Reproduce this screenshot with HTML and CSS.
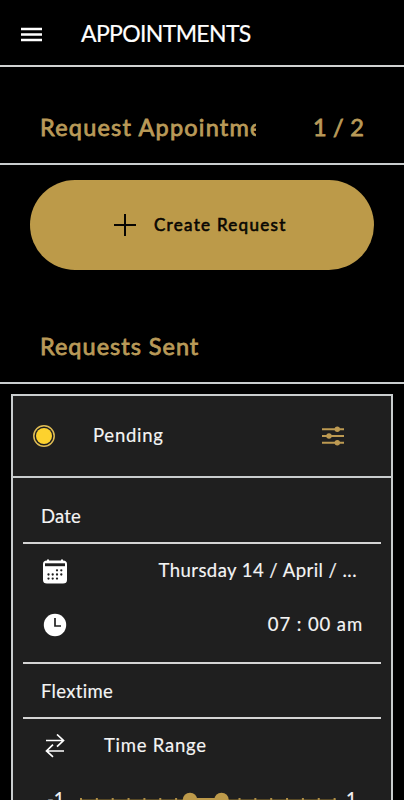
FILE: index.html
```html
<!DOCTYPE html>
<html lang="en">
<head>
<meta charset="utf-8">
<meta name="viewport" content="width=device-width, initial-scale=1">
<title>Appointments</title>
<link rel="stylesheet" href="styles.css">
</head>
<body>
<header class="topbar">
  <svg class="menu" width="21" height="15" viewBox="0 0 21 15" stroke="#fff" stroke-width="2.4"><path d="M0 2h21M0 7.5h21M0 13h21"/></svg>
  <h1 class="title"><span>APPOINTMENTS</span></h1>
</header>
<section class="section-head first">
  <h2 class="clip"><span class="t-appt">Request Appointment</span></h2>
  <span class="count">1 / 2</span>
</section>
<button class="create">
  <svg width="22" height="22" viewBox="0 0 22 22" stroke="#080602" stroke-width="2"><path d="M11 0v22M0 11h22"/></svg>
  <span class="t-create">Create Request</span>
</button>
<section class="section-head sent">
  <h2><span class="t-sent">Requests Sent</span></h2>
</section>
<main class="card">
  <div class="status">
    <svg width="22" height="22" viewBox="0 0 22 22"><circle cx="11" cy="11" r="10.2" fill="none" stroke="#e0bd55" stroke-width="1.5"/><circle cx="11" cy="11" r="8" fill="#fdd22e"/></svg>
    <span class="t-pending">Pending</span>
    <svg class="filter" width="22" height="20" viewBox="0 0 22 20" stroke="#bd9a52" stroke-width="1.9" fill="#bd9a52"><path d="M0 3.3h22M0 10h22M0 16.7h22"/><g stroke="none"><circle cx="15.3" cy="3.3" r="2.7"/><circle cx="7" cy="10" r="2.7"/><circle cx="15.3" cy="16.7" r="2.7"/></g></svg>
  </div>
  <div class="details">
    <h3 class="label date"><span class="t-date">Date</span></h3>
    <div class="row day">
      <svg width="24" height="25" viewBox="0 0 24 25"><path fill="#fff" d="M4 1.5V.5h2v1h12v-1h2v1q4 0 4 3.5v16q0 3.500-4 3.500H4q-4 0-4-3.500V5Q0 1.500 4 1.500Z"/><path fill="#1f1f1f" d="M2 4.300h20v2.900H2z"/><g fill="#1f1f1f"><circle cx="14" cy="11.300" r="1.150"/><circle cx="18.300" cy="11.300" r="1.150"/><circle cx="5.500" cy="15.500" r="1.150"/><circle cx="9.700" cy="15.500" r="1.150"/><circle cx="14" cy="15.500" r="1.150"/><circle cx="18.300" cy="15.500" r="1.150"/><circle cx="5.500" cy="19.600" r="1.150"/><circle cx="9.700" cy="19.600" r="1.150"/><circle cx="14" cy="19.600" r="1.150"/></g></svg>
      <span class="t-day">Thursday 14 / April / ...</span>
    </div>
    <div class="row time">
      <svg width="24" height="24" viewBox="0 0 24 24"><circle cx="12" cy="12" r="11.200" fill="#fff"/><path d="M12 5v8h6" fill="none" stroke="#1f1f1f" stroke-width="1.700"/></svg>
      <span class="t-time">07 : 00 am</span>
    </div>
    <h3 class="label flex"><span class="t-flex">Flextime</span></h3>
    <div class="row range">
      <svg width="20" height="24" viewBox="0 0 20 24" fill="none" stroke="#fff" stroke-width="1.700"><path d="M1 6.500h17.500M12 .5l6.500 6L12 12.700M19 17H1.500M8 10.700l-6.500 6.300L8 22.800"/></svg>
      <span class="t-range">Time Range</span>
    </div>
    <div class="slider">
      <span class="min">-1</span>
      <svg class="track" width="256" height="16" viewBox="0 0 256 16"><path d="M0 8h256" stroke="#594a26" stroke-width="2"/><path d="M0 8h256" stroke="#b08f47" stroke-width="4" stroke-dasharray="2 13.850"/><path d="M110 8h32" stroke="#bd9a4a" stroke-width="4"/><circle cx="110" cy="8" r="7.300" fill="#bd9a4a"/><circle cx="141.500" cy="8" r="7.300" fill="#bd9a4a"/></svg>
      <span class="max">1</span>
    </div>
  </div>
</main>
</body>
</html>
```
FILE: styles.css
```css
* { box-sizing: border-box; }
html, body { height: 800px; overflow: hidden; }
body { margin: 0; background: #000; color: #f4f4f4; font-family: Lato, "Open Sans", sans-serif; font-size: 18.5px; font-variant-ligatures: none; }
svg { display: block; flex: none; }
h1, h2, h3 { margin: 0; font-weight: 400; }
span { white-space: nowrap; }
.topbar { height: 67px; border-bottom: 2px solid #d0d2d2; display: flex; align-items: center; padding: 3px 21px 0; }
.title { margin: -2px 0 0 39px; font-size: 23px; line-height: 28px; color: #fff; letter-spacing: -0.65px; -webkit-text-stroke: 0.2px #fff; }
.section-head { display: flex; align-items: center; justify-content: space-between; padding: 0 40px; border-bottom: 2px solid #c9cdce; color: #b99a58; font-size: 23.5px; line-height: 32px; letter-spacing: 1px; -webkit-text-stroke: 0.8px #b99a58; }
.section-head h2 { font-size: inherit; font-weight: inherit; }
.first { height: 98px; padding-top: 24px; }
.clip { width: 216px; overflow: hidden; }
.t-appt { letter-spacing: 1.2px; }
.count { letter-spacing: 0.2px; }
.create { display: flex; align-items: center; width: 344px; height: 90px; margin: 15px 0 0 30px; padding: 0 0 0 84px; border: 0; border-radius: 45px; background: #bc9a49; color: #080602; font: 400 17px Lato, "Open Sans", sans-serif; gap: 18px; }
.t-create { margin-top: -2px; letter-spacing: 1.3px; -webkit-text-stroke: 0.6px #080602; }
.sent { height: 114px; padding-top: 40px; }
.card { width: 382px; height: 430px; margin: 10px 0 0 11px; border: 2px solid #c9cdce; background: #1f1f1f; }
.card span { padding-bottom: 2px; -webkit-text-stroke: 0.15px #f4f4f4; }
.status { height: 82px; border-bottom: 2px solid #c9cdce; display: flex; align-items: center; padding: 0 47px 0 20px; }
.t-pending { margin-left: 38px; letter-spacing: 0.75px; }
.filter { margin-left: auto; }
.details { padding: 0 10px; }
.label { font-size: inherit; border-bottom: 2px solid #d4d4d4; padding-left: 18px; display: flex; align-items: center; }
.date { height: 66px; padding-top: 13px; letter-spacing: 0.2px; }
.row { display: flex; align-items: center; padding: 0 18px 0 20px; justify-content: space-between; }
.day { height: 54px; padding-right: 24px; letter-spacing: 0.45px; }
.time { height: 54px; letter-spacing: 0.9px; }
.flex { margin-top: 10px; height: 57px; padding-top: 2px; border-top: 2px solid #d4d4d4; letter-spacing: 0.3px; }
.range { height: 54px; justify-content: flex-start; padding-left: 22px; gap: 39px; letter-spacing: 0.75px; }
.slider { display: flex; align-items: center; height: 54px; padding-left: 26px; }
.slider .min { width: 31px; margin-left: -2px; margin-right: 2px; }
.slider .max { margin-left: 10px; }
```
